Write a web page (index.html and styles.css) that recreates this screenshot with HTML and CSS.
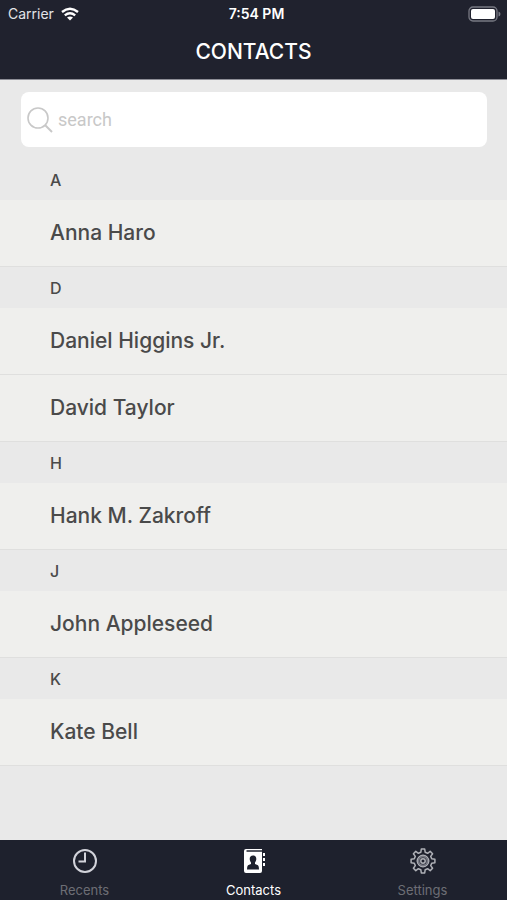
FILE: index.html
```html
<!DOCTYPE html>
<html lang="en">

<head>
    <meta charset="UTF-8">
    <meta name="viewport" content="width=device-width, initial-scale=1.0">
    <title>Contacts</title>

    <link rel="stylesheet" href="styles.css">
</head>

<body>

    <header class="header">
        <div class="status">
            <div class="carrier">
                <span>Carrier</span>
                <svg width="18" height="14" viewBox="0 0 18 14" fill="none" stroke="#fff" stroke-width="2.4">
                    <path d="M1 5 Q9 -1.5 17 5" />
                    <path d="M3.8 8.4 Q9 4.2 14.2 8.4" />
                    <path d="M9 13.4 L6 10.6 Q9 8.6 12 10.6 Z" fill="#fff" stroke="none" />
                </svg>
            </div>
            <div class="time">7:54 PM</div>
            <div class="battery">
                <svg width="33" height="16" viewBox="0 0 33 16">
                    <rect x="1" y="1" width="28" height="14" rx="4" fill="none" stroke="#777983" stroke-width="1.3" />
                    <rect x="3" y="3" width="24" height="10" rx="2" fill="#fff" />
                    <path d="M30.5 5.5 Q32.5 6 32.5 8 Q32.5 10 30.5 10.5 Z" fill="#777983" />
                </svg>
            </div>
        </div>
        <h1>CONTACTS</h1>
    </header>

    <main class="main">
        <label class="search">
            <svg width="26" height="26" viewBox="0 0 26 26" fill="none" stroke="#c8c8c8" stroke-width="1.6">
                <circle cx="11" cy="11" r="10" />
                <path d="M18 18 L25 25" stroke-width="2" />
            </svg>
            <input type="text" placeholder="search" aria-label="search">
        </label>

        <h2>A</h2>
        <ul>
            <li>Anna Haro</li>
        </ul>

        <h2>D</h2>
        <ul>
            <li>Daniel Higgins Jr.</li>
            <li>David Taylor</li>
        </ul>

        <h2>H</h2>
        <ul>
            <li>Hank M. Zakroff</li>
        </ul>

        <h2>J</h2>
        <ul>
            <li>John Appleseed</li>
        </ul>

        <h2>K</h2>
        <ul>
            <li>Kate Bell</li>
        </ul>
    </main>

    <nav class="tabs">
        <a href="#recents">
            <svg width="26" height="26" viewBox="0 0 26 26" fill="none" stroke="#d2d3da" stroke-width="2">
                <circle cx="13" cy="13" r="11" />
                <path d="M13 4.5 V13.5 H6.5" />
            </svg>
            <span>Recents</span>
        </a>
        <a href="#contacts" class="active">
            <svg width="26" height="26" viewBox="0 0 26 26">
                <path d="M5 1 H21 V2.2 H5.5 V3.8 H21 V23 Q21 25 19 25 H5 Q3 25 3 23 V3 Q3 1 5 1 Z" fill="#fff" />
                <path d="M22 5 H24 V8 H22 Z M22 10 H24 V13 H22 Z M22 15 H24 V18 H22 Z" fill="#fff" />
                <path d="M12 7.5 C14.2 7.5 15.4 9 15.3 11.2 C15.2 12.8 14.4 13.8 14 14.6 V16 L17 17.2 Q18 18 18 21.5 H6 Q6 18 7 17.2 L10 16 V14.6 C9.6 13.8 8.8 12.8 8.7 11.2 C8.6 9 9.8 7.5 12 7.5 Z" fill="#1e212d" />
            </svg>
            <span>Contacts</span>
        </a>
        <a href="#settings">
            <svg width="26" height="26" viewBox="-13 -13 26 26" fill="none" stroke="#aeb0b6" stroke-width="1.5" stroke-linejoin="round">
                <path d="M-2.2 -8.7 L-1.7 -11.9 H1.7 L2.2 -8.7 L4.6 -7.7 L7.2 -9.6 L9.6 -7.2 L7.7 -4.6 L8.7 -2.2 L11.9 -1.7 V1.7 L8.7 2.2 L7.7 4.6 L9.6 7.2 L7.2 9.6 L4.6 7.7 L2.2 8.7 L1.7 11.9 H-1.7 L-2.2 8.7 L-4.6 7.7 L-7.2 9.6 L-9.6 7.2 L-7.7 4.6 L-8.7 2.2 L-11.9 1.7 V-1.7 L-8.7 -2.2 L-7.7 -4.6 L-9.6 -7.2 L-7.2 -9.6 L-4.6 -7.7 Z" />
                <circle r="5" stroke="#777983" stroke-width="3" />
                <circle r="5.8" stroke-width="1" />
                <circle r="2.2" />
            </svg>
            <span>Settings</span>
        </a>
    </nav>

</body>

</html>
```
FILE: styles.css
```css
* {
    margin: 0;
    padding: 0;
    box-sizing: border-box;
}

body {
    display: flex;
    flex-direction: column;
    min-height: 100vh;
    background-color: #e9e9e9;
    color: #4a4a4a;
    font-family: Inter, sans-serif;
}

.header {
    background-color: #20222e;
    border-bottom: 1px solid #8d8e96;
    color: #fff;
}

.status {
    display: grid;
    grid-template-columns: 1fr auto 1fr;
    align-items: center;
    height: 27px;
    padding: 0 6px 0 8px;
    font-size: 14px;
}

.carrier {
    display: flex;
    align-items: center;
    gap: 7px;
    color: #e3e4e8;
}

.time {
    padding-left: 4px;
    font-weight: 600;
}

.battery {
    display: flex;
    justify-content: flex-end;
}

.header h1 {
    height: 52px;
    line-height: 50px;
    text-align: center;
    font-size: 21px;
    font-weight: 500;
}

.main {
    flex: 1;
}

.search {
    display: flex;
    align-items: center;
    gap: 5px;
    height: 55px;
    margin: 12px 20px 12px 21px;
    padding: 0 6px;
    background-color: #fff;
    border-radius: 8px;
}

.search input {
    flex: 1;
    min-width: 0;
    border: none;
    outline: none;
    background: none;
    font-family: Roboto, sans-serif;
    font-size: 18px;
}

.search input::placeholder {
    color: #c8c8c8;
}

.main h2 {
    padding: 2px 0 0 50px;
    line-height: 39px;
    font-size: 16px;
    font-weight: 500;
}

.main ul {
    list-style: none;
}

.main li {
    padding-left: 50px;
    line-height: 66px;
    background-color: #efefed;
    border-bottom: 1px solid #dfdfde;
    font-size: 21px;
    font-weight: 500;
}

.tabs {
    display: flex;
    height: 60px;
    background-color: #1e212d;
}

.tabs a {
    flex: 1;
    display: flex;
    flex-direction: column;
    align-items: center;
    gap: 7px;
    padding-top: 8px;
    color: #6d6e75;
    text-decoration: none;
    font-size: 13px;
    line-height: 18px;
}

.tabs a.active {
    color: #fff;
}
```
